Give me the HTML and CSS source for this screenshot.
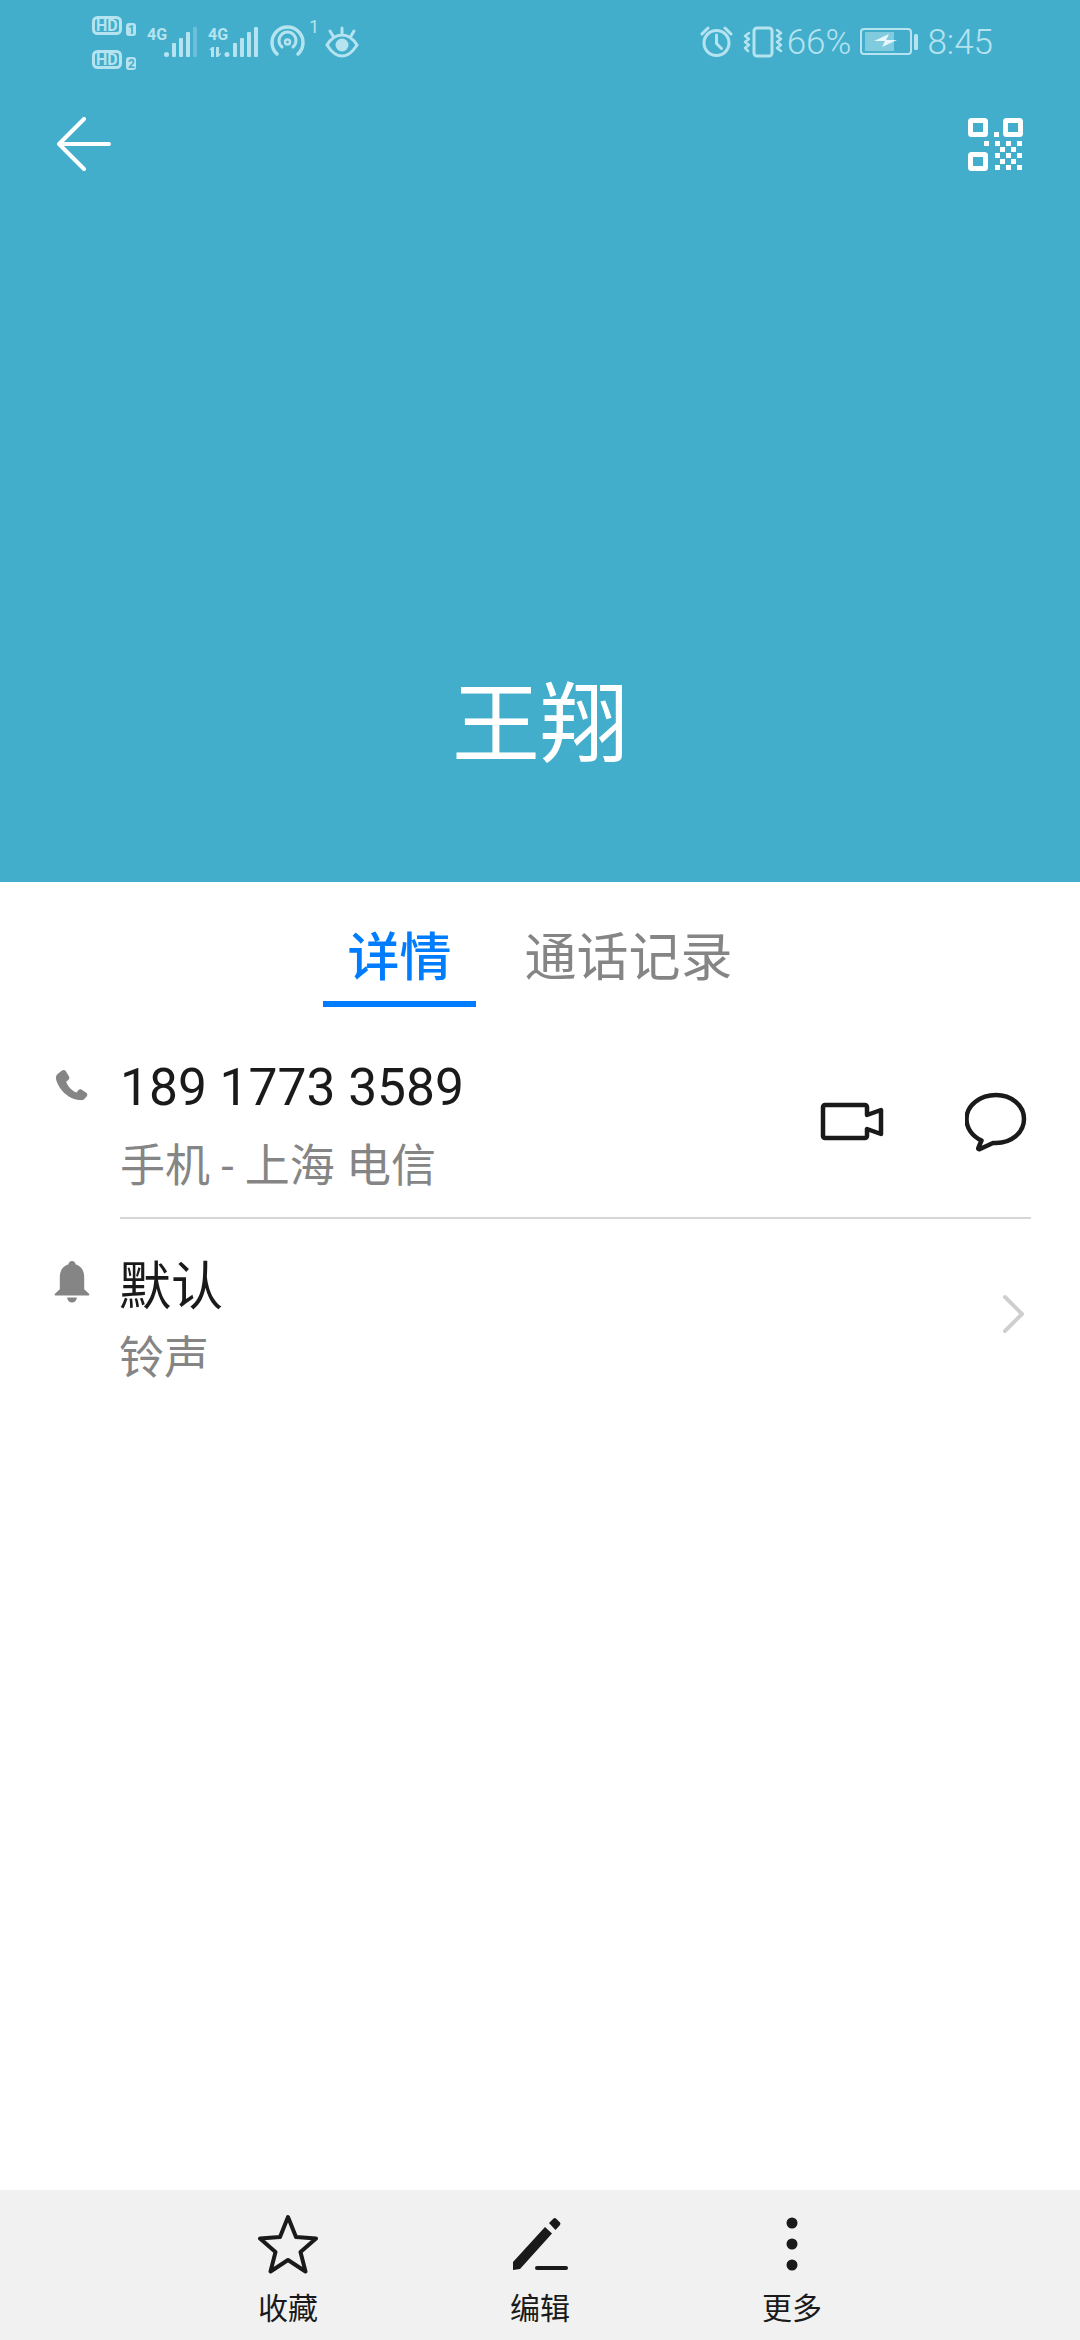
FILE: index.html
```html
<!DOCTYPE html>
<html lang="zh-CN">
<head>
<meta charset="utf-8">
<title>王翔</title>
<link rel="stylesheet" href="styles.css">
</head>
<body>
<div class="app">
  <header class="hero">
    <div class="status">
      <svg class="status-left" width="270" height="72" viewBox="92 0 270 72">
        <g fill="none" stroke="#b5e3ef" stroke-width="3">
          <rect x="93.500" y="17.500" width="27" height="16" rx="4"/>
          <rect x="93.500" y="51.500" width="27" height="16" rx="4"/>
        </g>
        <rect x="126" y="23" width="10" height="13" rx="3" fill="#b5e3ef"/>
        <rect x="126" y="57" width="10" height="13" rx="3" fill="#b5e3ef"/>
        <g class="st-tiny" fill="#b5e3ef">
          <text x="96" y="31">HD</text>
          <text x="96" y="65">HD</text>
          <text class="st-sim" x="128" y="34">1</text>
          <text class="st-sim" x="128" y="68">2</text>
          <text class="st-4g" x="147" y="40">4G</text>
          <text class="st-4g" x="208" y="40">4G</text>
          <text class="st-one" x="309" y="33">1</text>
        </g>
        <g fill="#b5e3ef">
          <circle cx="166.500" cy="54.500" r="2.500"/>
          <rect x="172" y="43" width="4" height="14" rx="1"/>
          <rect x="179" y="38" width="4" height="19" rx="1"/>
          <rect x="186" y="32" width="4" height="25" rx="1"/>
          <rect x="193" y="27" width="4" height="30" rx="1" opacity=".35"/>
          <circle cx="227" cy="54.500" r="2.500"/>
          <rect x="233" y="43" width="4" height="14" rx="1"/>
          <rect x="240" y="38" width="4" height="19" rx="1"/>
          <rect x="247" y="32" width="4" height="25" rx="1"/>
          <rect x="254" y="27" width="4" height="30" rx="1"/>
          <path d="M209 50l3-3h2v10h-3v-7zM216 47h3v7l2-1v1l-3 3h-2z"/>
        </g>
        <g fill="none" stroke="#b5e3ef" stroke-width="3.500" stroke-linecap="round">
          <path d="M277 54a15.500 15.500 0 1 1 21 0"/>
          <path d="M282 47a8.500 8.500 0 1 1 11 0" stroke-width="3"/>
          <circle cx="287.500" cy="42" r="2.500" stroke-width="2.500"/>
          <path d="M327 45c5-8 11-10 15-10s10 2 15 10c-5 8-11 11-15 11s-10-3-15-11z" stroke-width="3"/>
          <path d="M342 28v5M330 31l3 5M354 31l-3 5" stroke-width="3"/>
        </g>
        <circle cx="342" cy="45" r="6.500" fill="#b5e3ef"/>
      </svg>
      <div class="status-right">
        <svg width="84" height="40" viewBox="700 22 84 40">
          <g fill="none" stroke="#b5e3ef" stroke-width="3" stroke-linecap="round" stroke-linejoin="round">
            <circle cx="716.500" cy="43" r="12.500"/>
            <path d="M716.500 35v8.500l5 5"/>
            <path d="M702 34l6-6M731 34l-6-6"/>
            <rect x="754" y="28" width="18" height="28" rx="3"/>
            <path d="M749 33l-4 3 4 3-4 3 4 3-4 3 3 3" stroke-width="2.500"/>
            <path d="M777 30l4 3-4 3 4 3-4 3 4 3-4 3 4 3" stroke-width="2.500"/>
          </g>
        </svg>
        <span class="st-pct">66%</span>
        <svg width="60" height="30" viewBox="860 28 60 30">
          <rect x="861" y="30" width="50" height="25" rx="3" fill="none" stroke="#b5e3ef" stroke-width="2"/>
          <rect x="865" y="33" width="29" height="19" fill="#b5e3ef" opacity=".55"/>
          <path d="M874 42l15-7-3 6h11l-15 7 3-6z" fill="#e6f6fa"/>
          <rect x="914" y="35" width="4" height="16" rx="1.500" fill="#b5e3ef"/>
        </svg>
        <span class="st-time">8:45</span>
      </div>
    </div>
    <div class="toolbar">
      <svg width="54" height="54" viewBox="57 117 54 54">
        <path d="M84 119l-25 25 25 25M60 144h49" fill="none" stroke="#fff" stroke-width="4" stroke-linecap="round" stroke-linejoin="round"/>
      </svg>
      <svg width="56" height="54" viewBox="968 117 56 54">
        <g fill="none" stroke="#fff" stroke-width="5">
          <rect x="970.500" y="120.500" width="15" height="14" rx="1"/>
          <rect x="1005.500" y="120.500" width="15" height="14" rx="1"/>
          <rect x="970.500" y="154.500" width="15" height="14" rx="1"/>
        </g>
        <g fill="#fff">
          <rect x="994" y="132" width="5" height="5"/>
          <rect x="984" y="141" width="5" height="5"/>
          <rect x="995" y="141" width="5" height="5"/>
          <rect x="1006" y="141" width="5" height="5"/>
          <rect x="1017" y="141" width="5" height="5"/>
          <rect x="1000" y="147" width="5" height="5"/>
          <rect x="1011" y="147" width="5" height="5"/>
          <rect x="995" y="153" width="5" height="5"/>
          <rect x="1006" y="153" width="5" height="5"/>
          <rect x="1017" y="153" width="5" height="5"/>
          <rect x="1000" y="159" width="5" height="5"/>
          <rect x="1011" y="159" width="5" height="5"/>
          <rect x="995" y="165" width="5" height="5"/>
          <rect x="1006" y="165" width="5" height="5"/>
          <rect x="1017" y="165" width="5" height="5"/>
        </g>
      </svg>
    </div>
    <h1 class="name">王翔</h1>
  </header>

  <nav class="tabs">
    <div class="tab tab-on">详情</div>
    <div class="tab">通话记录</div>
  </nav>

  <main class="content">
    <section class="row">
      <svg class="row-icon" width="34" height="34" viewBox="0 0 34 34">
        <path d="M7 1.500c1.500-1 3-.5 3.800.800l3.200 5.200c.7 1.200.5 2.500-.5 3.300l-2.300 1.900c1.700 4.700 5.500 8.800 10.300 10.800l2-2.400c.9-1 2.200-1.100 3.300-.4l4.500 3.100c1.200.9 1.400 2.400.5 3.500l-2 2.300c-1 1.200-2.700 1.900-4.300 1.500C14 31 3.500 20.500 1 10c-.4-1.700.3-3.700 1.600-4.900z" fill="#858585"/>
      </svg>
      <div class="row-body row-line">
        <div class="row-text row-text-phone">
          <div class="primary num">189 1773 3589</div>
          <div class="secondary sec-phone">手机 - 上海 电信</div>
        </div>
        <div class="actions">
          <svg width="64" height="40" viewBox="819 1102 64 40">
            <path d="M822 1107a2 2 0 0 1 2-2h40a2 2 0 0 1 2 2v8l14-5v24l-14-5v7a2 2 0 0 1-2 2h-40a2 2 0 0 1-2-2z" fill="none" stroke="#1a1a1a" stroke-width="4.500" stroke-linejoin="round"/>
          </svg>
          <svg width="62" height="60" viewBox="964 1092 62 60">
            <path d="M995 1095c15 0 28 10 28 24s-13 24-28 24h-3l-13 6c-2 .5-2-.5-1.500-1.500l3-7c-9-4-15-12-15-21.500 0-14 14-24 29.500-24z" fill="none" stroke="#1a1a1a" stroke-width="4.500" stroke-linejoin="round"/>
          </svg>
        </div>
      </div>
    </section>
    <section class="row">
      <svg class="row-icon bell" width="36" height="42" viewBox="0 0 36 42">
        <path d="M18 0c2 0 3.500 1.500 3.500 3.300 6 1.700 8.700 6.700 8.700 13v12l4.800 4.500c.8.900.3 1.700-.8 1.700H1.800c-1.100 0-1.600-.8-.8-1.700l4.800-4.500v-12c0-6.300 2.700-11.300 8.700-13C14.500 1.500 16 0 18 0zM13 36.500h10c-.5 3-2.500 5-5 5s-4.500-2-5-5z" fill="#858585"/>
      </svg>
      <div class="row-body row-ring">
        <div class="row-text row-text-ring">
          <div class="primary">默认</div>
          <div class="secondary sec-ring">铃声</div>
        </div>
        <svg class="chevron" width="24" height="40" viewBox="0 0 24 40">
          <path d="M3 3l17 17L3 37" fill="none" stroke="#cfcfcf" stroke-width="4" stroke-linecap="round" stroke-linejoin="round"/>
        </svg>
      </div>
    </section>
  </main>

  <footer class="bottom">
    <div class="bottom-item">
      <svg width="62" height="60" viewBox="0 0 62 60">
        <path d="M31 3l8 20 20 1.500-15.500 13.500 5 19.500L31 46 13.500 57.500l5-19.500L3 24.500 23 23z" fill="none" stroke="#1a1a1a" stroke-width="4" stroke-linejoin="round"/>
      </svg>
      <span>收藏</span>
    </div>
    <div class="bottom-item">
      <svg width="62" height="60" viewBox="0 -2 62 60">
        <path d="M4 46L36 11l7 6.500L11 53l-7 1zM40 7l4.500-4.500a2 2 0 0 1 2.500 0l4 4a2 2 0 0 1 0 2.500L46.500 14z" fill="#1a1a1a"/>
        <rect x="26" y="50" width="33" height="4" rx="2" fill="#1a1a1a"/>
      </svg>
      <span>编辑</span>
    </div>
    <div class="bottom-item">
      <svg width="62" height="60" viewBox="0 0 62 60">
        <circle cx="31" cy="9" r="5.500" fill="#1a1a1a"/>
        <circle cx="31" cy="30" r="5.500" fill="#1a1a1a"/>
        <circle cx="31" cy="51" r="5.500" fill="#1a1a1a"/>
      </svg>
      <span>更多</span>
    </div>
  </footer>
</div>
</body>
</html>
```

FILE: styles.css
```css
* { box-sizing: border-box; }
html, body { margin: 0; padding: 0; }
body {
  font-family: Roboto, "Noto Sans CJK SC", sans-serif;
  background: #fff;
}
svg { display: block; flex: none; }
.app {
  width: 1080px;
  height: 2340px;
  display: flex;
  flex-direction: column;
  overflow: hidden;
}
.hero {
  height: 882px;
  background: #43aecc;
  display: flex;
  flex-direction: column;
  flex: none;
}
.status {
  height: 72px;
  padding: 0 87px 0 92px;
  display: flex;
  justify-content: space-between;
  align-items: flex-start;
}
.status-right {
  display: flex;
  align-items: center;
  height: 84px;
  color: #b5e3ef;
  font-size: 35px;
  font-weight: 300;
}
.st-pct { margin: 0 9px 0 3px; }
.st-time { margin-left: 7px; }
.st-tiny { font: 700 16px Roboto, sans-serif; }
.st-tiny .st-sim { font-size: 12px; fill: #43aecc; }
.st-tiny .st-one { font-size: 18px; font-weight: 400; }
.toolbar {
  display: flex;
  justify-content: space-between;
  padding: 45px 56px 0 57px;
}
.name {
  margin: 499px 0 0;
  height: 110px;
  line-height: 110px;
  text-align: center;
  color: #fff;
  font-size: 88px;
  font-weight: 400;
}
.tabs {
  height: 125px;
  flex: none;
  display: flex;
  justify-content: center;
  gap: 25px;
  font-size: 52px;
  color: #858585;
}
.tab {
  height: 125px;
  padding: 44px 24px 0;
  line-height: 66px;
}
.tab-on {
  color: #007dff;
  border-bottom: 6px solid #007dff;
  font-weight: 500;
}
.content { flex: 1; }
.row {
  display: flex;
  padding: 0 49px 0 55px;
}
.row-icon {
  margin: 62px 31px 0 0;
}
.row-icon.bell { margin: 42px 29px 0 -1px; }
.row-body {
  flex: 1;
  display: flex;
  justify-content: space-between;
  align-items: center;
}
.row-line { border-bottom: 2px solid #d6d6d6; height: 212px; padding-right: 4px; }
.row-ring { height: 190px; padding-right: 5px; }
.row-text-phone { padding-top: 30px; }
.row-text-ring { padding-top: 18px; }
.primary {
  font-size: 52px;
  line-height: 50px;
  color: #1a1a1a;
}
.primary.num { font-size: 51.5px; }
.secondary {
  font-size: 45px;
  line-height: 50px;
  color: #858585;
}
.sec-phone { margin-top: 29px; }
.sec-ring { margin-top: 21px; }
.actions {
  display: flex;
  align-items: center;
  gap: 81px;
  margin-top: 20px;
}
.bottom {
  height: 150px;
  flex: none;
  background: #f1f1f1;
  display: flex;
  justify-content: center;
  gap: 130px;
  padding-top: 24px;
}
.bottom-item {
  width: 122px;
  display: flex;
  flex-direction: column;
  align-items: center;
  gap: 17px;
  font-size: 30px;
  line-height: 36px;
  color: #1a1a1a;
}
```
